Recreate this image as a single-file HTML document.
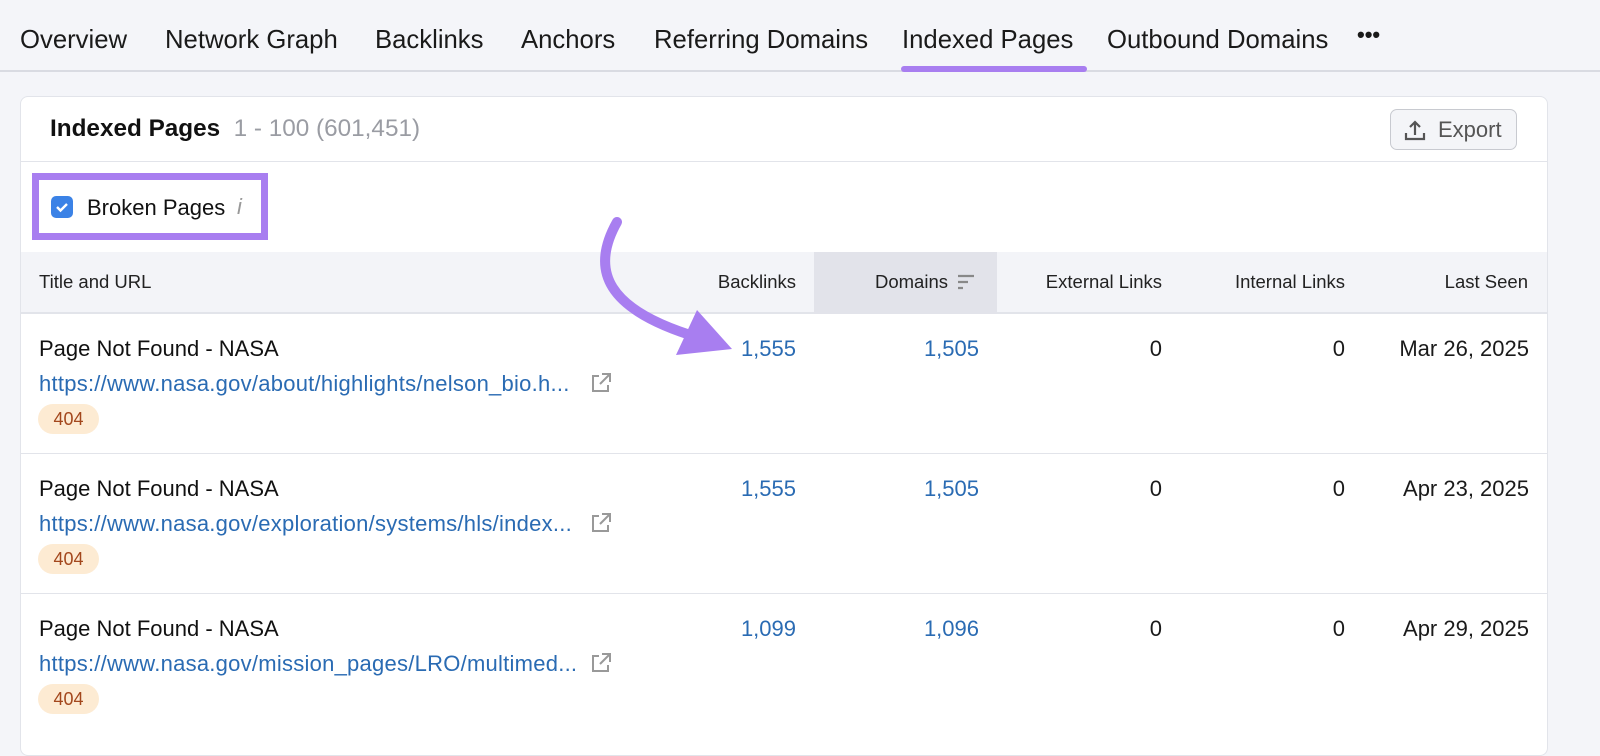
<!DOCTYPE html>
<html><head><meta charset="utf-8"><style>
*{margin:0;padding:0;box-sizing:border-box}
body{width:1600px;height:745px;background:#f4f5f9;font-family:"Liberation Sans",sans-serif;position:relative;overflow:hidden;color:#111}
.tab{position:absolute;top:26px;font-size:25.7px;color:#1a1a1a;white-space:nowrap}
.navline{position:absolute;left:0;top:70px;width:1600px;height:2px;background:#d9dbe2}
.ul{position:absolute;left:901px;top:66px;width:186px;height:6px;background:#a87ef0;border-radius:3px}
.card{position:absolute;left:20px;top:96px;width:1528px;height:660px;background:#fff;border:1px solid #e2e4ea;border-radius:8px;overflow:hidden}
.abs{position:absolute;white-space:nowrap}
.th{position:absolute;top:271px;font-size:18.5px;color:#222;white-space:nowrap}
.r{text-align:right}
.num{position:absolute;font-size:22px;color:#2a6bb3;text-align:right;width:200px}
.z{position:absolute;font-size:22px;color:#1a1a1a;text-align:right;width:200px}
.t{position:absolute;left:39px;font-size:22px;color:#111}
.u{position:absolute;left:39px;font-size:22px;letter-spacing:0.25px;color:#2a6bb3;white-space:nowrap}
.b{position:absolute;left:38px;width:61px;height:30px;border-radius:15px;background:#fdebd3;color:#a3471c;font-size:18px;text-align:center;line-height:30px}
.rl{position:absolute;left:20px;width:1528px;height:1px;background:#e2e4ea}
</style></head><body>
<div class="tab" style="left:20px">Overview</div>
<div class="tab" style="left:165px">Network Graph</div>
<div class="tab" style="left:375px">Backlinks</div>
<div class="tab" style="left:521px">Anchors</div>
<div class="tab" style="left:654px">Referring Domains</div>
<div class="tab" style="left:902px">Indexed Pages</div>
<div class="tab" style="left:1107px">Outbound Domains</div>
<div class="tab" style="left:1357px;font-weight:bold;top:22px;font-size:22px">•••</div>
<div class="navline"></div><div class="ul"></div>
<div class="card"></div>
<div class="abs" style="left:50px;top:115px;font-size:24.3px;font-weight:bold">Indexed Pages <span style="font-weight:normal;color:#9a9ca3">&nbsp;1 - 100 (601,451)</span></div>
<div class="abs" style="left:1390px;top:109px;width:127px;height:41px;border:1px solid #c8cad0;border-radius:7px;background:#f4f5f8;font-size:22px;color:#555;line-height:39px;padding-left:47px">Export</div>
<svg class="abs" style="left:1403px;top:118px" width="24" height="24" viewBox="0 0 24 24" fill="none" stroke="#555" stroke-width="2.2"><path d="M12 17V4M7 9l5-5 5 5M3 15v6h18v-6"/></svg>
<div class="abs" style="left:20px;top:161px;width:1528px;height:1px;background:#e2e4ea"></div>
<div class="abs" style="left:32px;top:173px;width:236px;height:67px;border:7px solid #a87ef0;background:#fff"></div>
<div class="abs" style="left:51px;top:196px;width:22px;height:22px;border-radius:5px;background:#3b82e6"></div>
<svg class="abs" style="left:51px;top:196px" width="22" height="22"><path d="M6 11l3.5 3.5L16 8" stroke="#fff" stroke-width="2.4" fill="none"/></svg>
<div class="abs" style="left:87px;top:195px;font-size:22px">Broken Pages</div>
<div class="abs" style="left:237px;top:194px;font-size:22px;color:#999;font-style:italic">i</div>
<div class="abs" style="left:21px;top:252px;width:1526px;height:62px;background:#f3f4f8;border-bottom:2px solid #e2e4ea"></div>
<div class="abs" style="left:814px;top:252px;width:183px;height:62px;background:#e2e3ea"></div>
<div class="th" style="left:39px">Title and URL</div>
<div class="th r" style="left:596px;width:200px">Backlinks</div>
<div class="th r" style="left:748px;width:200px">Domains</div>
<svg class="abs" style="left:957px;top:274px" width="18" height="16"><path d="M1 2h16M1 8h10M1 14h5" stroke="#888" stroke-width="2.2"/></svg>
<div class="th r" style="left:962px;width:200px">External Links</div>
<div class="th r" style="left:1145px;width:200px">Internal Links</div>
<div class="th r" style="left:1328px;width:200px">Last Seen</div>

<div class="t" style="top:336px">Page Not Found - NASA</div>
<div class="u" style="top:371px">https://www.nasa.gov/about/highlights/nelson_bio.h...</div>
<div class="b" style="top:404px">404</div>
<div class="num" style="left:596px;top:336px">1,555</div><div class="num" style="left:779px;top:336px">1,505</div>
<div class="z" style="left:962px;top:336px">0</div><div class="z" style="left:1145px;top:336px">0</div>
<div class="z" style="left:1329px;top:336px">Mar 26, 2025</div>
<div class="rl" style="top:453px"></div>

<div class="t" style="top:476px">Page Not Found - NASA</div>
<div class="u" style="top:511px">https://www.nasa.gov/exploration/systems/hls/index...</div>
<div class="b" style="top:544px">404</div>
<div class="num" style="left:596px;top:476px">1,555</div><div class="num" style="left:779px;top:476px">1,505</div>
<div class="z" style="left:962px;top:476px">0</div><div class="z" style="left:1145px;top:476px">0</div>
<div class="z" style="left:1329px;top:476px">Apr 23, 2025</div>
<div class="rl" style="top:593px"></div>

<div class="t" style="top:616px">Page Not Found - NASA</div>
<div class="u" style="top:651px">https://www.nasa.gov/mission_pages/LRO/multimed...</div>
<div class="b" style="top:684px">404</div>
<div class="num" style="left:596px;top:616px">1,099</div><div class="num" style="left:779px;top:616px">1,096</div>
<div class="z" style="left:962px;top:616px">0</div><div class="z" style="left:1145px;top:616px">0</div>
<div class="z" style="left:1329px;top:616px">Apr 29, 2025</div>

<svg class="abs" style="left:590px;top:372px" width="22" height="22" viewBox="0 0 22 22" fill="none" stroke="#999" stroke-width="2"><path d="M9 4H3v15h15v-6M12 2h8v8M20 2L10 12"/></svg>
<svg class="abs" style="left:590px;top:512px" width="22" height="22" viewBox="0 0 22 22" fill="none" stroke="#999" stroke-width="2"><path d="M9 4H3v15h15v-6M12 2h8v8M20 2L10 12"/></svg>
<svg class="abs" style="left:590px;top:652px" width="22" height="22" viewBox="0 0 22 22" fill="none" stroke="#999" stroke-width="2"><path d="M9 4H3v15h15v-6M12 2h8v8M20 2L10 12"/></svg>

<svg class="abs" style="left:0;top:0" width="1600" height="745">
<path d="M617 222 C590 270 605 310 700 338" stroke="#a87ef0" stroke-width="10" fill="none" stroke-linecap="round"/>
<path d="M676 355 L732 349 L697 310 Z" fill="#a87ef0"/>
</svg>
</body></html>
